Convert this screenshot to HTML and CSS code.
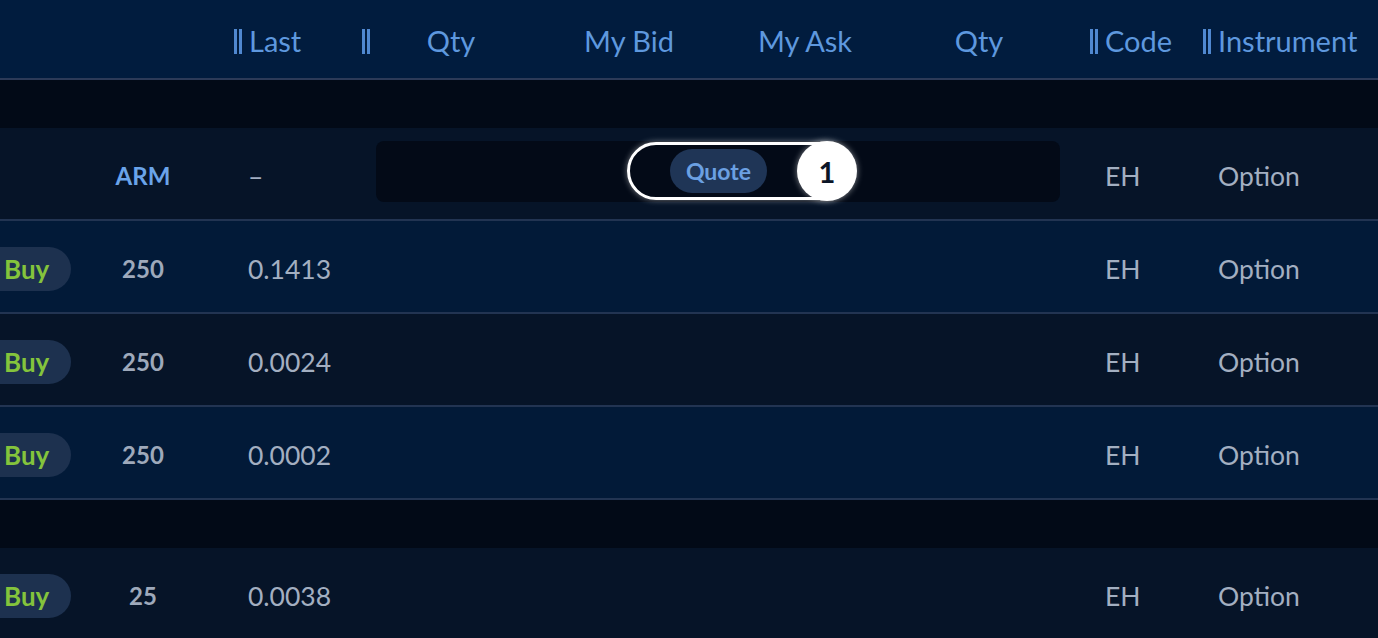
FILE: index.html
```html
<!DOCTYPE html>
<html>
<head>
<meta charset="utf-8">
<link rel="stylesheet" href="styles.css">
</head>
<body>
<div class="table">
  <div class="row head">
    <div class="cell"></div>
    <div class="cell"></div>
    <div class="cell hcell"><span class="bars"></span><span>Last</span></div>
    <div class="cell hcell"><span class="bars"></span></div>
    <div class="cell center">Qty</div>
    <div class="cell center">My Bid</div>
    <div class="cell center">My Ask</div>
    <div class="cell center">Qty</div>
    <div class="cell"></div>
    <div class="cell hcell"><span class="bars"></span><span>Code</span></div>
    <div class="cell hcell"><span class="bars"></span><span>Instrument</span></div>
  </div>

  <div class="spacer"></div>

  <div class="row data dark">
    <div class="cell"></div>
    <div class="cell qty sym">ARM</div>
    <div class="cell last">–</div>
    <div class="cell"></div>
    <div class="cell quotebox">
      <div class="hl">
        <div class="outline"><span class="chip">Quote</span></div>
        <span class="badge">1</span>
      </div>
    </div>
    <div class="cell code">EH</div>
    <div class="cell inst">Option</div>
  </div>

  <div class="row data navy">
    <div class="cell"><span class="buy">Buy</span></div>
    <div class="cell qty">250</div>
    <div class="cell last">0.1413</div>
    <div class="cell mid"></div>
    <div class="cell code">EH</div>
    <div class="cell inst">Option</div>
  </div>

  <div class="row data dark">
    <div class="cell"><span class="buy">Buy</span></div>
    <div class="cell qty">250</div>
    <div class="cell last">0.0024</div>
    <div class="cell mid"></div>
    <div class="cell code">EH</div>
    <div class="cell inst">Option</div>
  </div>

  <div class="row data navy">
    <div class="cell"><span class="buy">Buy</span></div>
    <div class="cell qty">250</div>
    <div class="cell last">0.0002</div>
    <div class="cell mid"></div>
    <div class="cell code">EH</div>
    <div class="cell inst">Option</div>
  </div>

  <div class="spacer"></div>

  <div class="row data dark last-row">
    <div class="cell"><span class="buy">Buy</span></div>
    <div class="cell qty">25</div>
    <div class="cell last">0.0038</div>
    <div class="cell mid"></div>
    <div class="cell code">EH</div>
    <div class="cell inst">Option</div>
  </div>
</div>
</body>
</html>
```

FILE: styles.css
```css
html, body {
  margin: 0;
  padding: 0;
  background: #020a17;
  overflow: hidden;
  width: 1378px;
  height: 638px;
}
body {
  font-family: Lato, "Noto Sans", sans-serif;
}
.table {
  display: flex;
  flex-direction: column;
}
.row {
  display: grid;
  grid-template-columns: 96px 138px 128px 14px 150px 206px 146px 202px 10px 113px 175px;
  align-items: center;
}
.cell {
  min-width: 0;
  white-space: nowrap;
}
.head {
  height: 78px;
  background: #011c3e;
  border-bottom: 2px solid #2c3a58;
  color: #5e98de;
  font-size: 29px;
}
.head .cell {
  padding-top: 2px;
}
.hcell {
  display: flex;
  align-items: center;
  gap: 7px;
}
.center {
  text-align: center;
}
.bars {
  display: inline-block;
  width: 2px;
  height: 25px;
  margin-top: 2px;
  border-left: 3px solid #5088d0;
  border-right: 3px solid #5088d0;
}
.spacer {
  height: 48px;
  background: #020a17;
}
.data {
  height: 91px;
  border-bottom: 2px solid #223452;
  font-size: 26.5px;
  color: #a3afc1;
}
.data .cell {
  padding-top: 4px;
}
.last-row {
  border-bottom: none;
}
.dark {
  background: #061428;
}
.navy {
  background: #021a38;
}
.qty {
  text-align: center;
  padding-right: 44px;
  font-weight: 700;
  font-size: 24px;
  color: #9ea9bb;
}
.sym {
  color: #6aa4ea;
}
.last {
  padding-left: 14px;
}
.mid {
  grid-column: 4 / 10;
}
.code {
  padding-left: 15px;
}
.inst {
  padding-left: 15px;
}
.buy {
  display: inline-flex;
  align-items: center;
  height: 44px;
  margin-left: -40px;
  padding: 0 22px 0 44px;
  border-radius: 22px;
  background: #1d314f;
  color: #84c43c;
  font-weight: 700;
  font-size: 26px;
}
.quotebox {
  grid-column: 5 / 10;
  margin-right: 30px;
  height: 61px;
  background: #030a17;
  border-radius: 8px;
  display: flex;
  align-items: center;
  padding-left: 251px;
  padding-top: 0 !important;
  margin-top: -5px;
}
.hl {
  position: relative;
  width: 230px;
  height: 58px;
}
.outline {
  box-sizing: border-box;
  width: 224px;
  height: 58px;
  border: 3px solid #ffffff;
  border-radius: 29px;
  box-shadow: 0 0 6px rgba(255, 255, 255, 0.45);
  display: flex;
  align-items: center;
  padding-left: 40px;
}
.chip {
  display: inline-flex;
  align-items: center;
  justify-content: center;
  width: 97px;
  height: 44px;
  border-radius: 22px;
  background: #1f3556;
  color: #6ba0e2;
  font-weight: 700;
  font-size: 23px;
}
.badge {
  position: absolute;
  right: 0;
  top: -1px;
  width: 60px;
  height: 60px;
  border-radius: 50%;
  background: #ffffff;
  box-shadow: 0 0 6px rgba(255, 255, 255, 0.5);
  color: #0b1526;
  font-weight: 700;
  font-size: 29px;
  display: flex;
  align-items: center;
  justify-content: center;
}
```
